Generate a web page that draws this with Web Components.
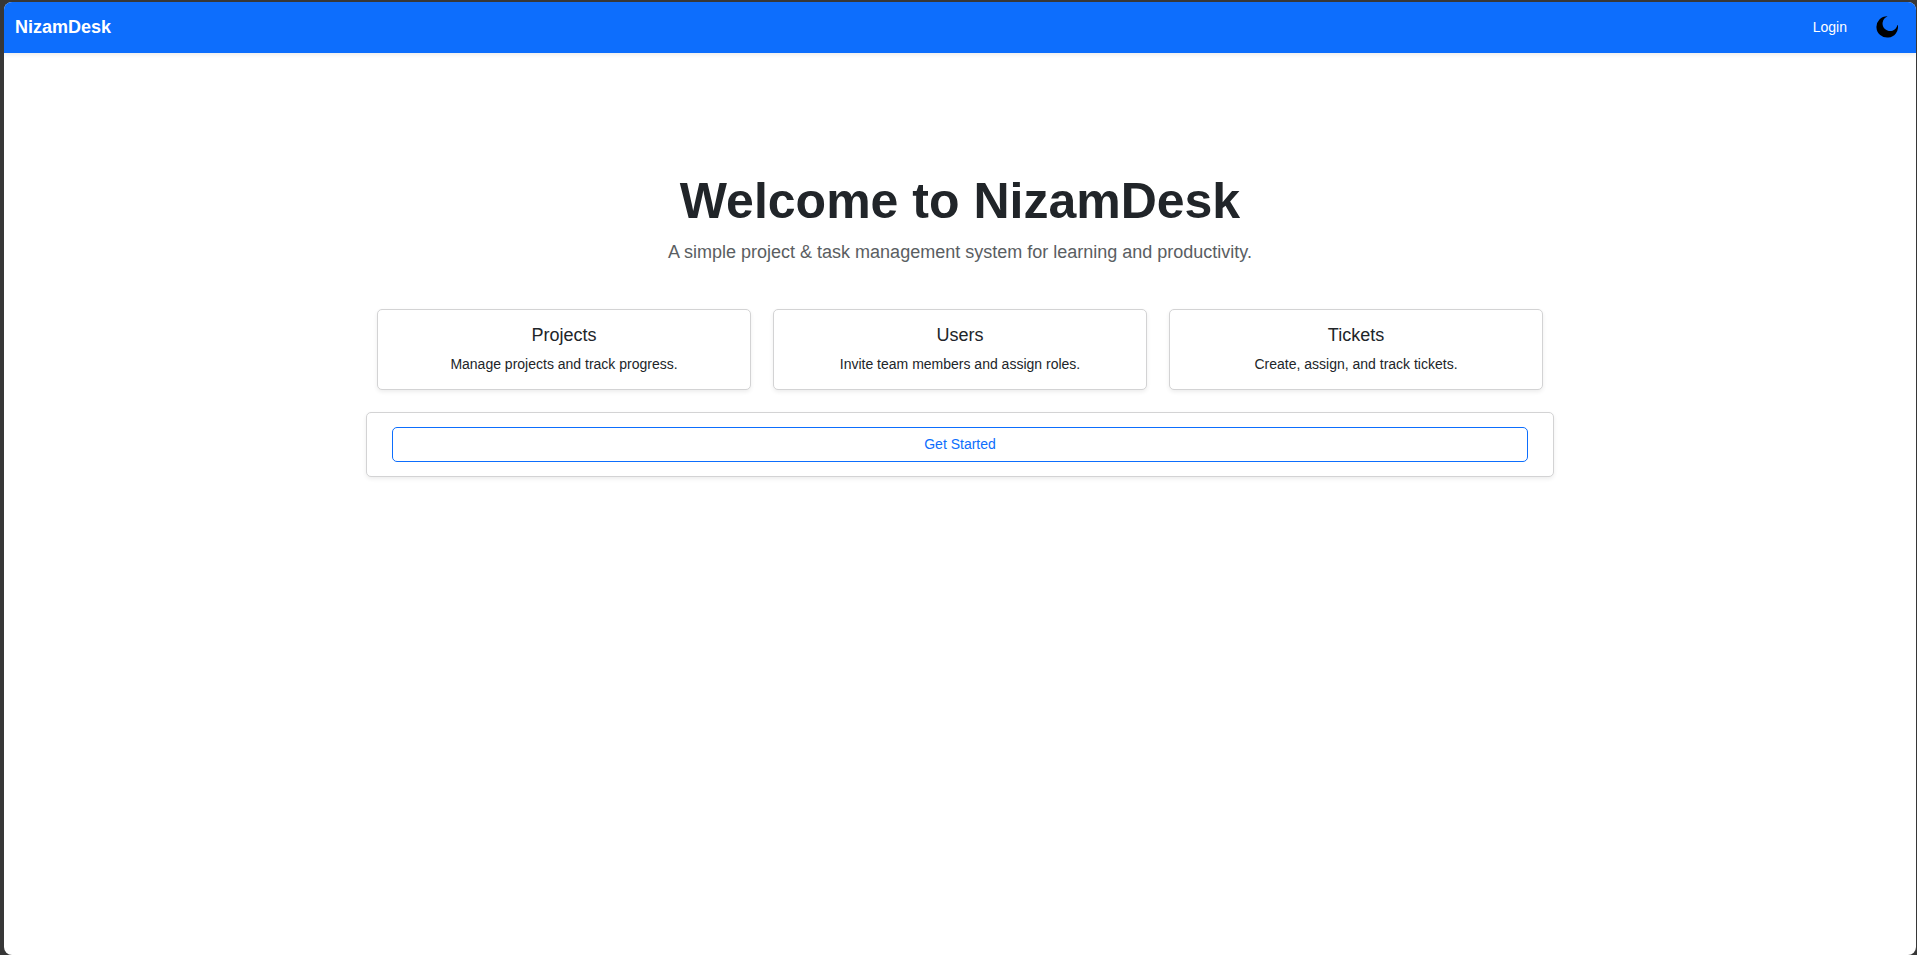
<!DOCTYPE html>
<html lang="en">
<head>
<meta charset="utf-8">
<meta name="viewport" content="width=device-width, initial-scale=1">
<title>NizamDesk</title>
<style>
  html { background: #373737; }
  body {
    margin: 0;
    font-family: "Liberation Sans", Arial, sans-serif;
    font-size: 14px;
    line-height: 22px;
    color: #212529;
  }
</style>
</head>
<body>
<nd-app>
  <nd-navbar slot="header" brand="NizamDesk"></nd-navbar>
  <nd-hero heading="Welcome to NizamDesk">A simple project &amp; task management system for learning and productivity.</nd-hero>
  <nd-features>
    <nd-card heading="Projects">Manage projects and track progress.</nd-card>
    <nd-card heading="Users">Invite team members and assign roles.</nd-card>
    <nd-card heading="Tickets">Create, assign, and track tickets.</nd-card>
  </nd-features>
  <nd-action href="#login">Get Started</nd-action>
</nd-app>

<script>
const define = (name, render) => customElements.define(name, class extends HTMLElement {
  connectedCallback() {
    if (!this.shadowRoot) this.attachShadow({ mode: "open" }).innerHTML = render(this);
  }
});

define("nd-app", () => `
  <style>
    :host {
      display: flex;
      box-sizing: border-box;
      min-height: 100vh;
      padding: 2px 1px 0 4px;
    }
    .window {
      flex: 1;
      min-width: 0;
      overflow: hidden;
      border-radius: 8px;
      background: #fff;
    }
    main {
      box-sizing: border-box;
      max-width: 1188px;
      margin: 0 auto;
      padding: 118px 11px 44px;
      text-align: center;
    }
  </style>
  <div class="window">
    <slot name="header"></slot>
    <main><slot></slot></main>
  </div>`);

define("nd-navbar", el => `
  <style>
    :host {
      display: block;
      background: #0d6efd;
      box-shadow: 0 2px 4px rgba(0, 0, 0, .075);
    }
    nav {
      display: flex;
      align-items: center;
      justify-content: space-between;
      min-height: 49px;
      padding: 0 11px 2px;
    }
    a { color: #fff; text-decoration: none; }
    .brand { font-size: 18px; font-weight: 700; }
    .tools { display: flex; align-items: center; gap: 22px; }
    button {
      display: flex;
      padding: 5px 7px 4px;
      border: 0;
      background: none;
      color: #000;
      cursor: pointer;
    }
  </style>
  <nav>
    <a class="brand" href="#home">${el.getAttribute("brand")}</a>
    <div class="tools">
      <a href="#login">Login</a>
      <button type="button" aria-label="Toggle dark mode">
        <svg width="22" height="22" viewBox="0 0 22 22" fill="currentColor" aria-hidden="true">
          <path d="M11.3 .2A10.8 10.7 0 1 0 21.9 9.2L21.4 9A7.5 7.5 0 1 1 11.3 .6Z"/>
        </svg>
      </button>
    </div>
  </nav>`);

define("nd-hero", el => `
  <style>
    :host { display: block; }
    h1 { margin: 0 0 8px; font-size: 50px; line-height: 60px; font-weight: 700; }
    p { margin: 0 0 43px; font-size: 18px; line-height: 27px; color: #5a5e62; }
  </style>
  <h1>${el.getAttribute("heading")}</h1>
  <p><slot></slot></p>`);

define("nd-features", () => `
  <style>
    :host {
      display: grid;
      grid-template-columns: repeat(auto-fit, minmax(300px, 1fr));
      gap: 22px;
      margin-bottom: 22px;
    }
  </style>
  <slot></slot>`);

define("nd-card", el => `
  <style>
    :host {
      display: block;
      padding: 14px;
      border: 1px solid #d3d3d4;
      border-radius: 5px;
      background: #fff;
      box-shadow: 0 2px 4px rgba(0, 0, 0, .075);
    }
    h2 { margin: 0 0 7px; font-size: 18px; line-height: 22px; font-weight: 400; }
    p { margin: 0; }
  </style>
  <h2>${el.getAttribute("heading")}</h2>
  <p><slot></slot></p>`);

define("nd-action", el => `
  <style>
    :host {
      display: block;
      margin: 0 -11px;
      padding: 14px 25px;
      border: 1px solid #d3d3d4;
      border-radius: 5px;
      background: #fff;
      box-shadow: 0 2px 4px rgba(0, 0, 0, .075);
    }
    a {
      display: block;
      padding: 5px 11px 6px;
      border: 1px solid #0d6efd;
      border-radius: 5px;
      color: #0d6efd;
      text-decoration: none;
    }
  </style>
  <a href="${el.getAttribute("href")}"><slot></slot></a>`);
</script>
</body>
</html>
